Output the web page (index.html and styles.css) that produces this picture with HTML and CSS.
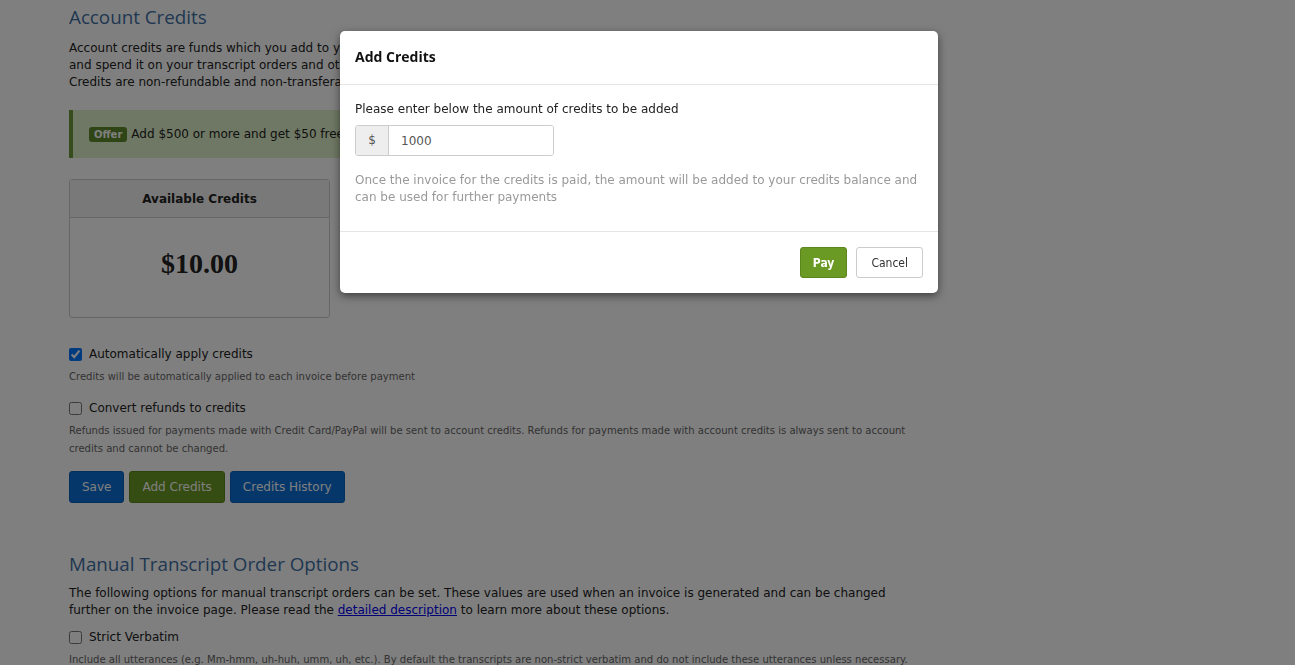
FILE: index.html
```html
<!DOCTYPE html>
<html lang="en">
<head>
    <meta charset="UTF-8">
    <title>Account Credits</title>
    <link rel="stylesheet" href="styles.css">
</head>
<body>
    <div class="page">
        <h2 class="section-title">Account Credits</h2>
        <p class="lead">Account credits are funds which you add to your account in advance<br>and spend it on your transcript orders and other services.<br>Credits are non-refundable and non-transferable.</p>

        <div class="offer">
            <span class="offer-tag">Offer</span> Add $500 or more and get $50 free credits on your account.
        </div>

        <div class="credits-card">
            <div class="credits-head">Available Credits</div>
            <div class="credits-amount">$10.00</div>
        </div>

        <!-- options -->
        <label class="check-row"><input type="checkbox" checked> Automatically apply credits</label>
        <div class="help">Credits will be automatically applied to each invoice before payment</div>

        <label class="check-row"><input type="checkbox"> Convert refunds to credits</label>
        <div class="help">Refunds issued for payments made with Credit Card/PayPal will be sent to account credits. Refunds for payments made with account credits is always sent to account credits and cannot be changed.</div>

        <div class="actions">
            <button class="btn btn-blue">Save</button>
            <button class="btn btn-green">Add Credits</button>
            <button class="btn btn-blue">Credits History</button>
        </div>

        <h2 class="section-title second">Manual Transcript Order Options</h2>
        <p class="lead">The following options for manual transcript orders can be set. These values are used when an invoice is generated and can be changed further on the invoice page. Please read the <a href="#">detailed description</a> to learn more about these options.</p>

        <label class="check-row tight"><input type="checkbox"> Strict Verbatim</label>
        <div class="help">Include all utterances (e.g. Mm-hmm, uh-huh, umm, uh, etc.). By default the transcripts are non-strict verbatim and do not include these utterances unless necessary.</div>
    </div>

    <div class="backdrop"></div>

    <!-- Add Credits dialog -->
    <div class="modal">
        <div class="modal-header">Add Credits</div>
        <div class="modal-body">
            <div class="modal-label">Please enter below the amount of credits to be added</div>
            <div class="input-group">
                <span class="addon">$</span>
                <input class="amount" type="text" value="1000">
            </div>
            <div class="modal-note">Once the invoice for the credits is paid, the amount will be added to your credits balance and can be used for further payments</div>
        </div>
        <div class="modal-footer">
            <button class="mbtn mbtn-pay">Pay</button>
            <button class="mbtn mbtn-cancel">Cancel</button>
        </div>
    </div>
</body>
</html>
```

FILE: styles.css
```css
body {
    margin: 0;
    padding: 0;
    background: #fff;
    font-family: "DejaVu Sans", Verdana, sans-serif;
    color: #222;
    overflow: hidden;
}
.page {
    width: 850px;
    padding: 0 0 0 69px;
}
.section-title {
    font-family: "Open Sans", sans-serif;
    font-weight: 400;
    font-size: 18.8px;
    color: #3f6fa3;
    margin: 4px 0 10px;
}
.section-title.second {
    margin-top: 48px;
    margin-bottom: 8px;
}
.lead {
    font-size: 12px;
    line-height: 17px;
    margin: 0 0 8px;
}
.lead a {
    color: #0000ee;
}
.offer {
    margin-top: 19px;
    height: 48px;
    box-sizing: border-box;
    display: flex;
    align-items: center;
    padding-left: 16px;
    background: #dff0c8;
    border-left: 4px solid #6e9a3c;
    font-size: 12px;
    width: 850px;
}
.offer-tag {
    background: #5e8a2c;
    color: #fff;
    font-size: 10px;
    font-weight: bold;
    padding: 2px 5px;
    border-radius: 3px;
    margin-right: 4px;
}
.credits-card {
    margin-top: 21px;
    width: 261px;
    box-sizing: border-box;
    border: 1px solid #ccc;
    border-radius: 3px;
    height: 139px;
}
.credits-head {
    height: 37px;
    line-height: 38px;
    background: #f2f2f2;
    border-bottom: 1px solid #ccc;
    text-align: center;
    font-size: 12px;
    font-weight: bold;
}
.credits-amount {
    text-align: center;
    font-family: "Liberation Serif", serif;
    font-weight: bold;
    font-size: 28px;
    padding-top: 30px;
}
.check-row {
    display: flex;
    align-items: center;
    font-size: 12px;
    margin-top: 29px;
}
.check-row.tight {
    margin-top: 11px;
}
.check-row input {
    margin: 0 7px 0 0;
    width: 13px;
    height: 13px;
}
.help {
    font-size: 10.05px;
    line-height: 18px;
    color: #666;
    margin-top: 7px;
}
.help + .check-row {
    margin-top: 15px;
}
.actions {
    display: flex;
    gap: 5px;
    margin-top: 13px;
}
.btn {
    font-family: "DejaVu Sans", sans-serif;
    font-size: 12px;
    color: #fff;
    border: 1px solid transparent;
    border-radius: 3px;
    height: 32px;
    padding: 0 12px;
}
.btn-blue {
    background: #0b6fd6;
    border-color: #0a60b8;
}
.btn-green {
    background: #6b9a24;
    border-color: #5a861c;
}
.backdrop {
    position: fixed;
    inset: 0;
    background: rgba(0, 0, 0, 0.5);
}
.modal {
    position: fixed;
    left: 340px;
    top: 31px;
    width: 598px;
    background: #fff;
    border-radius: 5px;
    box-shadow: 0 3px 9px rgba(0, 0, 0, 0.5);
}
.modal-header {
    font-family: "Open Sans", sans-serif;
    font-weight: 700;
    font-size: 14px;
    padding: 16px 15px 15px;
    height: 22px;
    border-bottom: 1px solid #e5e5e5;
    color: #111;
}
.modal-body {
    padding: 17px 15px 15px;
    font-size: 12px;
}
.modal-label {
    color: #222;
    margin: 0 0 9px;
}
.input-group {
    display: flex;
    width: 199px;
    height: 31px;
    box-sizing: border-box;
    border: 1px solid #ccc;
    border-radius: 3px;
    overflow: hidden;
}
.addon {
    width: 32px;
    background: #eee;
    border-right: 1px solid #ccc;
    text-align: center;
    line-height: 29px;
    color: #555;
}
.amount {
    border: 0;
    flex: 1;
    padding: 0 12px;
    font-family: "DejaVu Sans", sans-serif;
    font-size: 12px;
    color: #555;
    min-width: 0;
}
.modal-note {
    color: #999;
    margin-top: 16px;
    line-height: 17px;
    padding-bottom: 10px;
}
.modal-footer {
    border-top: 1px solid #e5e5e5;
    padding: 15px;
    display: flex;
    justify-content: flex-end;
    gap: 9px;
}
.mbtn {
    font-family: "DejaVu Sans Condensed", "DejaVu Sans", sans-serif;
    font-size: 12px;
    height: 31px;
    border-radius: 3px;
    padding: 0 12px;
}
.mbtn-pay {
    background: #6b9a24;
    border: 1px solid #5a861c;
    color: #fff;
    font-weight: bold;
}
.mbtn-cancel {
    background: #fff;
    border: 1px solid #ccc;
    color: #333;
    padding: 0 14px;
}
```
